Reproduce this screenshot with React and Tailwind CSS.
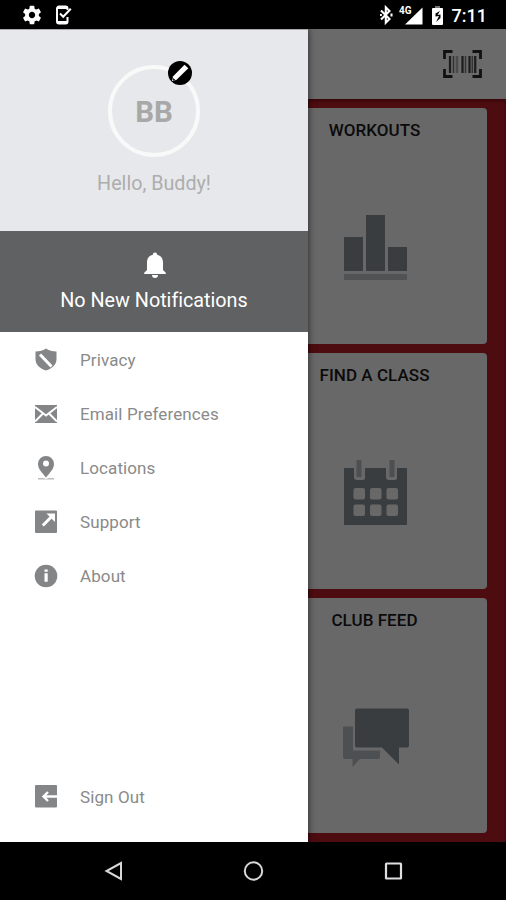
const iconBase = 'block shrink-0';

function GearIcon() {
  return (
    <svg className={iconBase} width="22" height="22" viewBox="0 0 24 24" fill="#fff">
      <path d="M19.43 12.98c.04-.32.07-.64.07-.98s-.03-.66-.07-.98l2.11-1.65c.19-.15.24-.42.12-.64l-2-3.46c-.12-.22-.39-.3-.61-.22l-2.49 1c-.52-.4-1.08-.73-1.69-.98l-.38-2.65C14.46 2.18 14.25 2 14 2h-4c-.25 0-.46.18-.49.42l-.38 2.65c-.61.25-1.17.59-1.69.98l-2.49-1c-.23-.09-.49 0-.61.22l-2 3.46c-.13.22-.07.49.12.64l2.11 1.65c-.04.32-.07.65-.07.98s.03.66.07.98l-2.11 1.65c-.19.15-.24.42-.12.64l2 3.46c.12.22.39.3.61.22l2.49-1c.52.4 1.08.73 1.69.98l.38 2.65c.03.24.24.42.49.42h4c.25 0 .46-.18.49-.42l.38-2.65c.61-.25 1.17-.59 1.69-.98l2.49 1c.23.09.49 0 .61-.22l2-3.46c.12-.22.07-.49-.12-.64zM12 15.5c-1.93 0-3.5-1.57-3.5-3.5s1.57-3.5 3.5-3.5 3.5 1.57 3.5 3.5-1.570 3.5-3.5 3.5z" />
    </svg>
  );
}

function PhoneCheckIcon() {
  return (
    <svg className={iconBase} width="17" height="20" viewBox="0 0 17 20" fill="none">
      <path d="M12.500 5V3.500a2 2 0 0 0-2-2H4a2 2 0 0 0-2 2v13a2 2 0 0 0 2 2h6.500a2 2 0 0 0 2-2V12" stroke="#fff" strokeWidth="2" />
      <path d="M2 2.800h10.500M2 17.200h10.500" stroke="#fff" strokeWidth="2.600" />
      <path d="M5 8.500l3.200 3.200 7.600-8" stroke="#fff" strokeWidth="2" />
    </svg>
  );
}

function StatusBar() {
  return (
    <div className="flex h-[29px] shrink-0 items-start bg-black text-white">
      <div className="flex items-center gap-3 pt-1 pl-[21px]">
        <GearIcon />
        <PhoneCheckIcon />
      </div>
      <div className="ml-auto flex items-start pt-[5px] pr-[19px]">
        <svg className={iconBase} width="13" height="20" viewBox="0 0 13 20" fill="none" stroke="#fff" strokeWidth="2.100">
          <path d="M1 5.500l8.500 8.500-3.700 3.700V2.300L9.500 6 1 14.500" />
          <path d="M.8 9v2M11.500 8.500v3" />
        </svg>
        <svg className="ml-[6px] block shrink-0" width="25" height="20" viewBox="0 0 25 20" fill="#fff">
          <path d="M23.500 2.500V19.500H6z" />
          <text x="0" y="9" fontFamily="Roboto, sans-serif" fontSize="10" fontWeight="700" stroke="#000" strokeWidth="1.500" paintOrder="stroke" textLength="12.500" lengthAdjust="spacingAndGlyphs">4G</text>
        </svg>
        <svg className="ml-[7px] block shrink-0" width="13" height="20" viewBox="0 0 13 20">
          <path d="M4 1h5v2H4z" fill="#777" />
          <path d="M2 3h9a1 1 0 0 1 1 1v15a1 1 0 0 1-1 1H2a1 1 0 0 1-1-1V4a1 1 0 0 1 1-1z" fill="#fff" />
          <path d="M9 6L4.500 8.500v3L8 11l-3 6 4.500-4V9.500L6.500 10z" fill="#000" />
        </svg>
        <span className="ml-[8px] pt-px text-[18px] leading-5 font-medium">7:11</span>
      </div>
    </div>
  );
}

function BarcodeIcon() {
  return (
    <svg className={iconBase} width="39" height="28" viewBox="0 0 39 28" fill="none">
      <path d="M1.500 9V1.500h8M29.500 1.500h8V9M37.500 19v7.500h-8M9.500 26.500h-8V19" stroke="#111" strokeWidth="2.800" />
      <path d="M7 6v17M19.500 6v17M26.500 6v17M32.200 6v17" stroke="#1d1d1d" strokeWidth="2.200" />
      <path d="M10.500 6v17M22.500 6v17M29.300 6v17" stroke="#333" strokeWidth="1.500" />
      <path d="M14 6v17" stroke="#4b4b4b" strokeWidth="2.500" />
    </svg>
  );
}

function ChartIcon() {
  return (
    <svg className={iconBase} width="66" height="70" viewBox="0 0 66 70">
      <path d="M1 24h19v34H1zM23 2h19v56H23zM45 34h19v24H45z" fill="#393d40" />
      <path d="M1 61h63v6H1z" fill="#505254" />
    </svg>
  );
}

function CalendarIcon() {
  return (
    <svg className={iconBase} width="66" height="70" viewBox="0 0 66 70">
      <path d="M1 10h10v9a3 3 0 0 0 3 3h6a2 2 0 0 0 2-2V10h21v9a3 3 0 0 0 3 3h6a2 2 0 0 0 2-2V10h10v57H1z" fill="#393d40" />
      <path d="M13.500 2h5v17h-5zM46.500 2h5v17h-5z" fill="#4d4f51" />
      <g fill="#686868">
        <rect x="10.500" y="30" width="11.500" height="11.500" rx="2" />
        <rect x="27" y="30" width="11.500" height="11.500" rx="2" />
        <rect x="43.500" y="30" width="11.500" height="11.500" rx="2" />
        <rect x="10.500" y="46.500" width="11.500" height="11.500" rx="2" />
        <rect x="27" y="46.500" width="11.500" height="11.500" rx="2" />
        <rect x="43.500" y="46.500" width="11.500" height="11.500" rx="2" />
      </g>
    </svg>
  );
}

function ChatIcon() {
  return (
    <svg className={iconBase} width="68" height="70" viewBox="0 0 68 70">
      <path d="M2 23.500h9V47.500h27v6.500a2 2 0 0 1-2 2H18l-7.500 8v-8H3a2 2 0 0 1-2-2v-29.500a1 1 0 0 1 1-1z" fill="#4d5053" />
      <path d="M15 5.500h50a2 2 0 0 1 2 2v35a2 2 0 0 1-2 2h-8v17L40 44.500H15a2 2 0 0 1-2-2v-35a2 2 0 0 1 2-2z" fill="#393d40" />
    </svg>
  );
}

function Tile({ title, children, className = '' }) {
  return (
    <div className={`flex w-[225px] flex-col items-center rounded-[4px] bg-[#686868] ${className}`}>
      <h2 className="mt-[12px] text-[17px] leading-5 font-medium tracking-[0.05px] whitespace-nowrap text-[#0b0b0b]">{title}</h2>
      <div className="mt-[73px] ml-[2px]">{children}</div>
    </div>
  );
}

function Dashboard() {
  return (
    <div className="flex w-[198px] flex-col overflow-hidden bg-[#4d0c10]">
      <div className="flex h-[70px] shrink-0 items-center justify-end bg-[#6a6a6a] pr-6">
        <BarcodeIcon />
      </div>
      <div className="flex flex-1 flex-col items-end gap-[9px] pt-[9px] pr-[19px] shadow-[inset_0_2px_3px_#38080b]">
        <Tile title="WORKOUTS" className="h-[236px]"><ChartIcon /></Tile>
        <Tile title="FIND A CLASS" className="h-[236px]"><CalendarIcon /></Tile>
        <Tile title="CLUB FEED" className="h-[235px]"><ChatIcon /></Tile>
      </div>
    </div>
  );
}

function MenuIcon({ children }) {
  return (
    <svg className={iconBase} width="24" height="24" viewBox="0 0 24 24" fill="#848586">{children}</svg>
  );
}

const items = [
  {
    label: 'Privacy',
    icon: (
      <>
        <path d="M12 .5C9.500 2.500 5.500 3.500 1.500 3.500V11c0 6 4.500 9.500 10.500 11.500 6-2 10.500-5.500 10.500-11.500V3.500c-4 0-8-1-10.500-3z" />
        <path d="M6 6.500l11.500 12" stroke="#fff" strokeWidth="3" />
      </>
    ),
  },
  {
    label: 'Email Preferences',
    icon: (
      <>
        <path d="M1 3h22v18H1z" />
        <path d="M1 5l11 8.500L23 5M1 19.500l7.500-7.500M23 19.500l-7.500-7.500" stroke="#fff" strokeWidth="2" fill="none" />
      </>
    ),
  },
  {
    label: 'Locations',
    icon: (
      <>
        <path fillRule="evenodd" d="M12 0a8 8 0 0 0-8 8c0 5 4 8.500 8 13.500C16 16.500 20 13 20 8a8 8 0 0 0-8-8zm0 4.500a3 3 0 1 1 0 6 3 3 0 0 1 0-6z" />
        <path d="M4 22h5.500l2.500 1 2.500-1H20v1.500H4z" fill="#bcbcbc" />
      </>
    ),
  },
  {
    label: 'Support',
    icon: (
      <>
        <path d="M2 .5h20a1 1 0 0 1 1 1v20.500a1 1 0 0 1-1 1H2a1 1 0 0 1-1-1v-20.500a1 1 0 0 1 1-1z" />
        <path d="M8.800 15.500L18.500 5.800" stroke="#fff" strokeWidth="3" fill="none" />
        <path d="M12.500 3.500H21V12l-2.800-2.800-3-3z" fill="#fff" />
      </>
    ),
  },
  {
    label: 'About',
    icon: (
      <>
        <circle cx="12" cy="12" r="11.300" />
        <path d="M10.500 5.500h3.200v2.300h-3.200zM10.500 9.300h3.200v8.500h-3.200z" fill="#fff" />
      </>
    ),
  },
];

function MenuRow({ icon, label }) {
  return (
    <div className="flex h-[54px] items-center gap-[22px] pl-[34px]">
      <MenuIcon>{icon}</MenuIcon>
      <span className="pb-px text-[17px] leading-5 tracking-[0.1px] text-[#8a8a8a]">{label}</span>
    </div>
  );
}

function Drawer() {
  return (
    <div className="z-10 flex w-[308px] shrink-0 flex-col bg-white shadow-[0_0_7px_rgba(0,0,0,.65)]">
      <div className="flex h-[202px] shrink-0 flex-col items-center border-t border-[#aaa] bg-[#e7e8eb]">
        <div className="relative mt-[35px] flex size-[92px] items-center justify-center rounded-full border-4 border-[#f9f9fa]">
          <span className="pt-px text-[29.5px] leading-8 font-bold text-[#a8a8a8]">BB</span>
          <svg className="absolute -top-[9px] right-[3px]" width="26" height="26" viewBox="0 0 26 26">
            <circle cx="13" cy="13" r="12" fill="#000" />
            <path d="M17.500 4.700l3.800 3.600L9.600 19.800 5 21.300 6.200 16.300z" fill="#fff" />
            <path d="M6.300 18l2 2-2.300.7z" fill="#000" />
          </svg>
        </div>
        <p className="mt-[15px] text-[19.7px] leading-6 text-[#adadad]">Hello, Buddy!</p>
      </div>
      <div className="flex h-[101px] shrink-0 flex-col items-center bg-[#606163]">
        <svg className="mt-[20px] ml-px block" width="24" height="28" viewBox="0 0 24 28" fill="#fff">
          <path d="M12 1.500a2.200 2.200 0 0 0-2.200 2.200C6 4.700 4 7.500 4 11.500V19l-2.800 2.700V23h21.600v-1.300L20 19v-7.500c0-4-2-6.800-5.800-7.800A2.200 2.200 0 0 0 12 1.500z" />
          <path d="M9 24h6a3 3 0 0 1-6 0z" />
        </svg>
        <p className="mt-[10px] text-[19.8px] leading-6 tracking-[-0.02px] text-white">No New Notifications</p>
      </div>
      <nav className="flex flex-1 flex-col pt-px">
        {items.map((item) => <MenuRow key={item.label} {...item} />)}
        <div className="mt-auto mb-[18px]">
          <MenuRow
            label="Sign Out"
            icon={
              <>
                <path d="M2 0h20a1 1 0 0 1 1 1v20.500a1 1 0 0 1-1 1H2a1 1 0 0 1-1-1V1a1 1 0 0 1 1-1z" />
                <path d="M24 11.500H10M14 7l-4.500 4.500L14 16" stroke="#fff" strokeWidth="2.400" fill="none" />
              </>
            }
          />
        </div>
      </nav>
    </div>
  );
}

function NavBar() {
  return (
    <div className="flex h-[58px] shrink-0 items-center justify-center gap-[116px] bg-black">
      <svg className={iconBase} width="24" height="24" viewBox="0 0 24 24" fill="none" stroke="#d8d8d8" strokeWidth="2">
        <path d="M20 4v16L5.500 12z" />
      </svg>
      <svg className={iconBase} width="24" height="24" viewBox="0 0 24 24" fill="none" stroke="#d8d8d8" strokeWidth="2">
        <circle cx="12.500" cy="12" r="8.700" />
      </svg>
      <svg className={iconBase} width="24" height="24" viewBox="0 0 24 24" fill="none" stroke="#e0dde2" strokeWidth="2.200">
        <rect x="5" y="4.500" width="15" height="15" rx=".5" />
      </svg>
    </div>
  );
}

export default function App() {
  return (
    <div className="flex h-[900px] w-[506px] flex-col overflow-hidden bg-black font-['Roboto',sans-serif]">
      <StatusBar />
      <div className="flex h-[813px] shrink-0 overflow-hidden">
        <Drawer />
        <Dashboard />
      </div>
      <NavBar />
    </div>
  );
}
